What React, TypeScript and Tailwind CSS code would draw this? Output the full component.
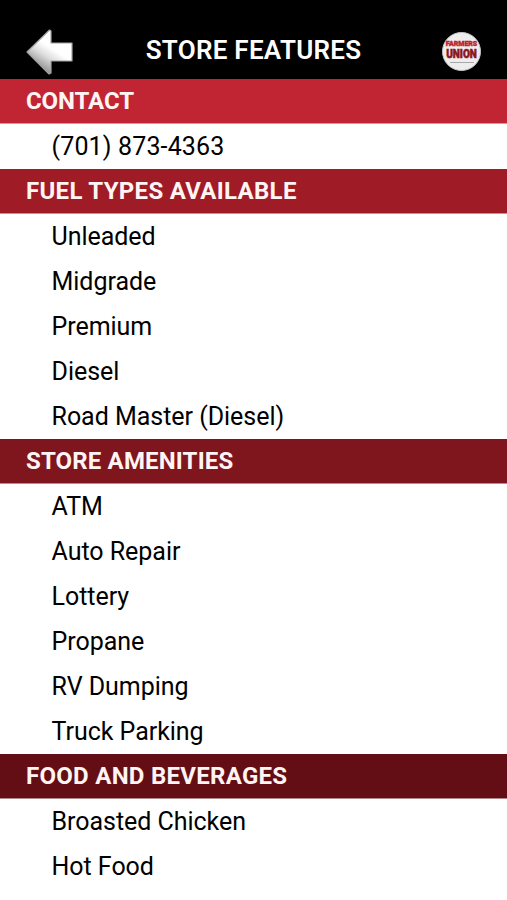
import React from 'react';

interface Section {
  title: string;
  style: string;
  items: string[];
}

const sections: Section[] = [
  { title: 'CONTACT', style: 'bg-[#c12432] tracking-[-0.1px]', items: ['(701) 873-4363'] },
  {
    title: 'FUEL TYPES AVAILABLE',
    style: 'bg-[#9f1b26] tracking-[0.3px]',
    items: ['Unleaded', 'Midgrade', 'Premium', 'Diesel', 'Road Master (Diesel)'],
  },
  {
    title: 'STORE AMENITIES',
    style: 'bg-[#7f151d] tracking-[0.15px]',
    items: ['ATM', 'Auto Repair', 'Lottery', 'Propane', 'RV Dumping', 'Truck Parking'],
  },
  {
    title: 'FOOD AND BEVERAGES',
    style: 'bg-[#620e14] tracking-[0.28px]',
    items: ['Broasted Chicken', 'Hot Food'],
  },
];

const BackArrow = () => (
  <svg width="48" height="48" viewBox="0 0 48 48">
    <defs>
      <linearGradient id="arrow" x1="0.6" y1="0.45" x2="0.3" y2="0.9">
        <stop offset="0" stopColor="#ffffff" />
        <stop offset="0.4" stopColor="#dddddd" />
        <stop offset="1" stopColor="#8c8c8c" />
      </linearGradient>
    </defs>
    <path
      d="M1 24 L23.5 2 L25 3 V15 H46 V33 H25 V45 L23 46 Z"
      fill="url(#arrow)"
      stroke="#a3a3a3"
      strokeWidth="1.2"
      strokeLinejoin="round"
    />
  </svg>
);

const Logo = () => (
  <div className="flex size-[39px] flex-col items-center rounded-full border border-[#c9c9c9] bg-[#ededed] pt-[7px] font-black whitespace-nowrap">
    <span className="text-[7px] leading-[8px] text-[#c01f30] [-webkit-text-stroke:0.4px_#c01f30]">FARMERS</span>
    <span className="origin-center scale-y-125 text-[10px] leading-[12px] text-[#8c1620] [-webkit-text-stroke:0.5px_#8c1620]">UNION</span>
    <span className="mt-[2px] h-px w-[24px] bg-[#a8a8a8]" />
  </div>
);

export default function App() {
  return (
    <div className="h-[900px] w-full overflow-hidden bg-white font-['Roboto',sans-serif] text-[25px] text-black">
      <header className="flex h-[79px] items-center justify-between bg-black pt-[24px] pr-[26px] pl-[26px] text-white">
        <BackArrow />
        <h1 className="-ml-[9px] pb-[2px] text-[26px] font-semibold tracking-[0.27px]">STORE FEATURES</h1>
        <Logo />
      </header>
      {sections.map((section) => (
        <section key={section.title}>
          <h2 className={`flex h-[45px] items-center border-b border-white/50 pl-[26px] text-[24px] font-bold text-[#fff4f4] ${section.style}`}>
            {section.title}
          </h2>
          <ul>
            {section.items.map((item) => (
              <li
                key={item}
                className={`flex h-[45px] items-center pl-[51.5px] ${item.startsWith('(') ? 'tracking-[0.15px]' : 'tracking-[-0.03px]'}`}
              >
                {item}
              </li>
            ))}
          </ul>
        </section>
      ))}
    </div>
  );
}
